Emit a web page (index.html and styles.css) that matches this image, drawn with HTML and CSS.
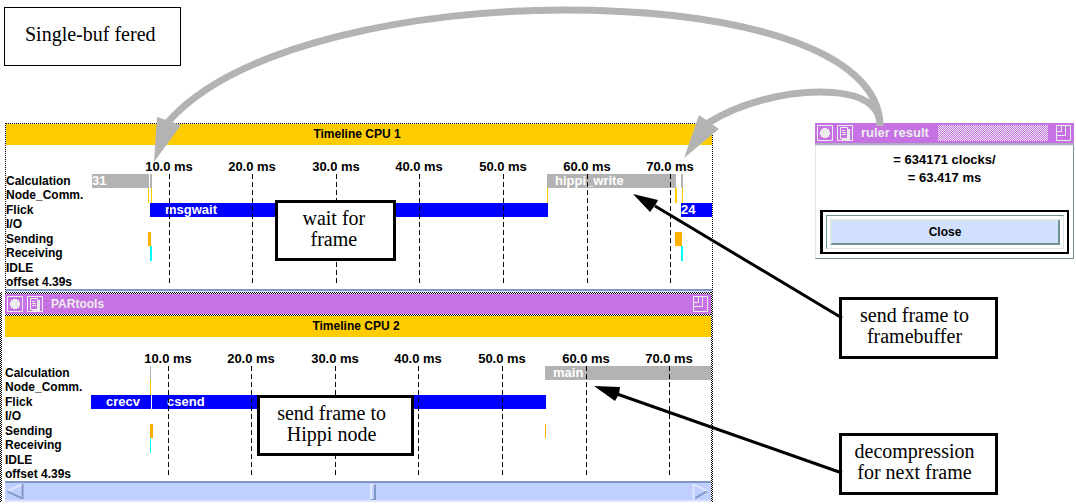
FILE: index.html
```html
<!DOCTYPE html>
<html lang="en">
<head>
<meta charset="utf-8">
<title>Single-buffered timeline</title>
<link rel="stylesheet" href="styles.css">
</head>
<body>
<svg class="symbols" aria-hidden="true">
  <symbol id="icon-dot" viewBox="0 0 16 16"><path d="M.5.5h15v15H.5z" fill="none" stroke="#ececec"/><path d="M6 3h4v1h2v2h1v4h-1v2h-2v1H6v-1H4v-2H3V6h1V4h2z" fill="#ececec"/></symbol>
  <symbol id="icon-page" viewBox="0 0 16 16" fill="none" stroke="#ececec"><path d="M.5.5h15v15H.5z"/><path d="M3.5 2.5h7v11h-7z"/><path d="M12 4v10H5" stroke-width="2"/><path d="M5 5.5h3M5 7.5h4M5 9.5h4"/></symbol>
  <symbol id="icon-size" viewBox="0 0 16 16" fill="none" stroke="#ececec"><path d="M.5.5h14v15H.5zM.5 10.500h9V.5M.5 6.500h5V.5"/></symbol>
</svg>
<main class="stage">
  <div class="traces">
    <h1 class="caption">Single-buf fered</h1>

    <section class="window window-first">
      <h2 class="heading">Timeline CPU 1</h2>
      <div class="chart">
        <div class="axis">
          <span class="tick" style="--x:163">10.0 ms</span><span class="tick" style="--x:246">20.0 ms</span><span class="tick" style="--x:330">30.0 ms</span><span class="tick" style="--x:413">40.0 ms</span><span class="tick" style="--x:497">50.0 ms</span><span class="tick" style="--x:581">60.0 ms</span><span class="tick" style="--x:664">70.0 ms</span>
        </div>
        <div class="rows">
          <div class="row">Calculation
            <span class="bar calc" style="--x:86;--w:57">31</span><span class="bar calc" style="--x:144;--w:2"></span><span class="bar calc named" style="--x:541;--w:129">hippi_write</span><span class="bar calc" style="--x:675;--w:2"></span></div>
          <div class="row">Node_Comm.
            <span class="bar comm" style="--x:142;--w:1"></span><span class="bar comm" style="--x:145;--w:1"></span><span class="bar comm" style="--x:541;--w:1"></span><span class="bar comm" style="--x:669;--w:2"></span><span class="bar comm" style="--x:676;--w:1"></span></div>
          <div class="row">Flick
            <span class="bar flick wide" style="--x:144;--w:398">msgwait</span><span class="bar flick" style="--x:675;--w:31">24</span></div>
          <div class="row">I/O</div>
          <div class="row">Sending
            <span class="bar send" style="--x:142;--w:3"></span><span class="bar send" style="--x:669;--w:7"></span></div>
          <div class="row">Receiving
            <span class="bar receive" style="--x:144;--w:2"></span><span class="bar receive" style="--x:675;--w:2"></span></div>
          <div class="row">IDLE</div>
          <div class="row">offset 4.39s</div>
          <i class="rule" style="--x:163"></i><i class="rule" style="--x:246"></i><i class="rule" style="--x:330"></i><i class="rule" style="--x:413"></i><i class="rule" style="--x:497"></i><i class="rule" style="--x:581"></i><i class="rule" style="--x:664"></i>
        </div>
      </div>
      <div class="sill"></div>
    </section>

    <section class="window-second">
      <header class="titlebar main-title">
        <button class="tool" aria-label="Window menu"><svg><use href="#icon-dot"/></svg></button>
        <button class="tool" aria-label="Properties"><svg><use href="#icon-page"/></svg></button>
        <span class="name">PARtools</span>
        <button class="tool" aria-label="Resize"><svg><use href="#icon-size"/></svg></button>
      </header>
      <h2 class="heading">Timeline CPU 2</h2>
      <div class="chart">
        <div class="axis">
          <span class="tick" style="--x:163">10.0 ms</span><span class="tick" style="--x:246">20.0 ms</span><span class="tick" style="--x:330">30.0 ms</span><span class="tick" style="--x:413">40.0 ms</span><span class="tick" style="--x:497">50.0 ms</span><span class="tick" style="--x:581">60.0 ms</span><span class="tick" style="--x:664">70.0 ms</span>
        </div>
        <div class="rows">
          <div class="row">Calculation
            <span class="bar calc" style="--x:145;--w:1"></span><span class="bar calc named" style="--x:540;--w:166">main</span></div>
          <div class="row">Node_Comm.
            <span class="bar comm" style="--x:145;--w:1"></span></div>
          <div class="row">Flick
            <span class="bar flick wide" style="--x:86;--w:60">crecv</span><span class="bar flick wide" style="--x:147;--w:394">csend</span></div>
          <div class="row">I/O</div>
          <div class="row">Sending
            <span class="bar send" style="--x:145;--w:3"></span><span class="bar send" style="--x:540;--w:1"></span></div>
          <div class="row">Receiving
            <span class="bar receive" style="--x:145;--w:1"></span></div>
          <div class="row">IDLE</div>
          <div class="row">offset 4.39s</div>
          <i class="rule" style="--x:163"></i><i class="rule" style="--x:246"></i><i class="rule" style="--x:330"></i><i class="rule" style="--x:413"></i><i class="rule" style="--x:497"></i><i class="rule" style="--x:581"></i><i class="rule" style="--x:664"></i>
        </div>
      </div>
      <div class="scrollbar">
        <button class="step" aria-label="Scroll left"><svg viewBox="0 0 18 18" fill="none" stroke-width="2"><path d="M17 1v16" stroke="#7f97c2"/><path d="M16 2 2 8" stroke="#dfe7ff"/><path d="M1 9l15 7" stroke="#7f97c2"/></svg></button>
        <input class="slide" type="range" min="0" max="1000" value="523" aria-label="Timeline position">
        <button class="step" aria-label="Scroll right"><svg viewBox="0 0 18 18" fill="none" stroke-width="2"><path d="M1 1v16M2 2l13 6" stroke="#dfe7ff"/><path d="M15 9 3 16" stroke="#7f97c2"/></svg></button>
      </div>
    </section>
  </div>

  <div class="notes">
    <section class="dialog">
      <header class="titlebar">
        <button class="tool" aria-label="Window menu"><svg><use href="#icon-dot"/></svg></button>
        <button class="tool" aria-label="Properties"><svg><use href="#icon-page"/></svg></button>
        <span class="name name-large">ruler result</span>
        <span class="grip"></span>
        <button class="tool" aria-label="Resize"><svg><use href="#icon-size"/></svg></button>
      </header>
      <div class="result">
        <p>= 634171 clocks/</p>
        <p>= 63.417 ms</p>
        <div class="default-ring"><div class="groove"><button class="close">Close</button></div></div>
      </div>
    </section>
    <p class="callout">send frame to<br>framebuffer</p>
    <p class="callout">decompression<br>for next frame</p>
  </div>

  <svg class="arrows" viewBox="0 0 1076 504" preserveAspectRatio="none" aria-hidden="true">
    <g fill="none" stroke="#b3b3b3" stroke-width="7">
      <path d="M880 126C880 50 740 10 563 10C420 10 238 43 168 122"/>
      <path d="M880 126C880 100 852 92 820 92C782 92 738 104 708 123"/>
    </g>
    <path d="M154 162 157 117 169 121 181 125zM684 158 699 115 709 122 719 129z" fill="#b3b3b3"/>
    <path d="M842 318 655 206M842 473 617 394" stroke="#000" stroke-width="3"/>
    <path d="M633 194l25 6-2 4-6 8zM594 386l26 1-1 7-4 7z"/>
  </svg>
  <p class="callout over wait">wait for<br>frame</p>
  <p class="callout over node">send frame to<br>Hippi node</p>
</main>
</body>
</html>
```

FILE: styles.css
```css
:root {
  --purple: #c671e4;
  --gold: #ffcc00;
  --light: #dce8e8;
  --teal: #6f9292;
  --checks: repeating-conic-gradient(#000 0 25%, #fff 0 50%) 0 0 / 2px 2px;
}

* { box-sizing: border-box; }

body {
  margin: 0;
  background: #fff;
  color: #000;
  font: bold 12px/14px "Liberation Sans", Arial, sans-serif;
}

h1, h2, p { margin: 0; font: inherit; }

button { margin: 0; padding: 0; border: 0; background: none; font: inherit; color: inherit; }

.symbols { display: none; }

.stage {
  position: relative;
  display: grid;
  grid-template-columns: 713fr 259fr;
  column-gap: 102px;
  padding: 7px 2px 2px 0;
}

.caption {
  width: fit-content;
  margin: 0 0 57px 4px;
  padding: 16px 24px 20px 20px;
  border: 1px solid #000;
  font: 20px/21px "Liberation Serif", "Times New Roman", serif;
}

/* Timeline windows */
.window-first {
  margin-left: 5px;
  border: 1px dotted #000;
  border-bottom: 0;
}

.window-second {
  padding: 0 2px 0 5px;
  background:
    linear-gradient(#fff, #fff) 2px 0 / calc(100% - 4px) 100% no-repeat,
    var(--checks);
}

.heading {
  padding-right: 4px;
  background: var(--gold);
  line-height: 21px;
  text-align: center;
}

.sill {
  height: 3px;
  border-top: 2px solid #7f97c2;
  background: #dfe7ff;
}

.axis {
  position: relative;
  height: 29px;
}

.tick {
  position: absolute;
  left: calc(var(--x) / 706 * 100%);
  bottom: 0;
  transform: translateX(-50%);
  font-size: 13px;
  white-space: nowrap;
}

.rows {
  position: relative;
  display: grid;
  grid-template-rows: repeat(7, 1fr) 14px;
  height: 115px;
}

.row {
  position: relative;
  line-height: 14px;
}

.bar {
  position: absolute;
  top: 0;
  bottom: 0;
  left: calc(var(--x) / 706 * 100%);
  width: calc(var(--w) / 706 * 100%);
  color: #fff;
  font-size: 13px;
  white-space: nowrap;
}

.calc { background: #b3b3b3; }
.comm { background: var(--gold); }
.flick { background: #0000ff; }
.send { background: #ffb000; }
.receive { background: #00ffff; }
.named { padding-left: 8px; }
.wide { padding-left: 15px; }

.rule {
  position: absolute;
  top: 0;
  bottom: 3px;
  left: calc(var(--x) / 706 * 100%);
  width: 1px;
  background: repeating-linear-gradient(#000 0 5px, transparent 5px 8px);
}

/* Title bars */
.titlebar {
  display: flex;
  align-items: center;
  gap: 4px;
  height: 20px;
  padding: 0 2px;
  background: var(--purple);
  color: #ececec;
}

.main-title {
  box-sizing: content-box;
  border: solid transparent;
  border-width: 2px 0;
  background:
    linear-gradient(var(--purple), var(--purple)) padding-box,
    var(--checks) border-box;
}

.tool, .tool svg {
  display: block;
  width: 16px;
  height: 16px;
}

.name { flex: 1; padding-left: 4px; }
.name-large { flex: none; font-size: 13px; }

.grip {
  flex: 1;
  height: 16px;
  margin: 0 4px 0 5px;
  background: repeating-conic-gradient(#ececec 0 25%, var(--purple) 0 50%) 0 0 / 2px 2px;
}

/* Scroll bar */
.scrollbar {
  display: flex;
  align-items: center;
  height: 21px;
  padding: 0 1px;
  border-top: 2px solid #7f97c2;
  border-bottom: 2px solid #dfe7ff;
  background: #bfcfff;
}

.step, .step svg {
  display: block;
  width: 18px;
  height: 17px;
}

.slide {
  flex: 1;
  min-width: 0;
  height: 17px;
  margin: 0;
  appearance: none;
  background: transparent;
}

.slide::-webkit-slider-thumb {
  appearance: none;
  width: 6px;
  height: 16px;
  border: solid;
  border-width: 1px 2px 1px 2px;
  border-color: #dfe7ff #7f97c2 #7f97c2 #dfe7ff;
  background: #bfcfff;
}

/* Result dialog and notes */
.notes { padding-top: 116px; }

.result {
  padding: 5px 4px 4px;
  border: 1px solid;
  border-color: var(--light) var(--teal) var(--teal) var(--light);
  text-align: center;
  font-size: 13px;
  line-height: 18px;
}

.dialog .titlebar {
  box-sizing: content-box;
  border-bottom: 2px solid #b0abc4;
}

.default-ring {
  margin-top: 23px;
  padding: 3px;
  border: 2px solid #000;
  border-left-width: 3px;
}

.groove {
  padding: 3px;
  border: 1px solid;
  border-color: var(--teal) var(--light) var(--light) var(--teal);
}

.close {
  display: block;
  width: 100%;
  border: 2px solid;
  border-color: var(--light) var(--teal) var(--teal) var(--light);
  background: #d2e0ff;
  font-size: 12px;
  line-height: 22px;
}

.callout {
  margin: 38px 76px 0 24px;
  padding: 5px 8px 9px 0;
  border: 3px solid #000;
  background: #fff;
  font: 20px/21px "Liberation Serif", "Times New Roman", serif;
  text-align: center;
  white-space: nowrap;
}

.callout + .callout { margin-top: 74px; }

.arrows {
  position: absolute;
  top: 0;
  left: 0;
  width: 100%;
  height: 504px;
  pointer-events: none;
}

.stage .over {
  position: absolute;
  margin: 0;
  padding-bottom: 8px;
}

.stage .wait { left: 25.6%; top: 200px; padding-left: 24px; padding-right: 28px; }
.stage .node { left: 23.9%; top: 395px; padding-left: 17px; padding-right: 25px; }
```
